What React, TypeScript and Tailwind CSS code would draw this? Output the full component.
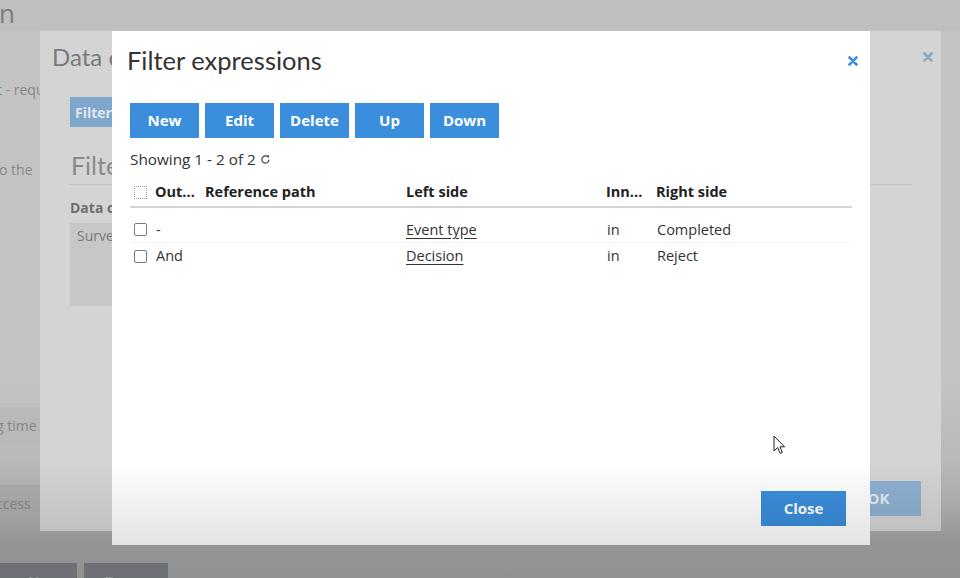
import React from "react";

const btn =
  "h-[35px] w-[69px] bg-[#3b8edc] text-white font-bold text-[15px] flex items-center justify-center";

function XIcon({ className }: { className?: string }) {
  return (
    <svg viewBox="0 0 10 10" className={className} fill="none">
      <path d="M1.5 1.5 L8.5 8.5 M8.5 1.5 L1.5 8.5" stroke="currentColor" strokeWidth="2.6" strokeLinecap="round" />
    </svg>
  );
}

function Refresh() {
  return (
    <svg viewBox="0 0 12 12" className="w-[11px] h-[11px] ml-[4px] mt-[1px]" fill="none">
      <path d="M9.8 6.3 A3.9 3.9 0 1 1 8.4 3" stroke="#555" strokeWidth="1.5" />
      <path d="M7 1.2 L10.2 1.6 L9.4 4.6 Z" fill="#555" />
    </svg>
  );
}

function Cursor() {
  return (
    <svg viewBox="0 0 13 20" className="absolute left-[773px] top-[435px] w-[13px] h-[20px]">
      <path d="M1 1 L1 16 L4.6 12.6 L7.2 18.4 L9.4 17.4 L6.9 11.8 L11.6 11.8 Z" fill="white" stroke="#222" strokeWidth="1" strokeLinejoin="round" />
    </svg>
  );
}

const rows = [
  { op: "-", left: "Event type", inn: "in", right: "Completed" },
  { op: "And", left: "Decision", inn: "in", right: "Reject" },
];

const grid = "grid grid-cols-[25px_50px_201px_200px_50px_1fr] items-center";

export default function App() {
  return (
    <div
      className="relative w-[960px] h-[578px] overflow-hidden bg-[linear-gradient(to_bottom,#c3c3c3_0px,#c3c3c3_380px,#b4b4b4_500px,#a7a7a7_540px,#a5a5a5_100%)] text-[#878787]"
      style={{ fontFamily: '"Open Sans", "Liberation Sans", sans-serif' }}
    >
      {/* underlying page */}
      <div className="flex flex-col">
        <div className="shrink-0 h-[31px] bg-[#bfbfbf] flex items-center">
          <span className="text-[26px] leading-none -mt-[6px] ml-[-1px] text-[#7d7d7d]">n</span>
        </div>
        <div className="shrink-0 mt-[49px] text-[14px] leading-[20px] ml-[-3px]">t - required</div>
        <div className="shrink-0 mt-[60px] text-[14px] leading-[20px] ml-[-1px]">o the</div>
        <div className="shrink-0 mt-[227px] w-[120px] h-[36px] bg-[#b9b9b9] flex items-center text-[14px] ml-[-4px]">g time</div>
        <div className="shrink-0 mt-[42px] w-[120px] h-[36px] bg-[#adadad] flex items-center text-[14px] ml-[-4px]">ccess</div>
        <div className="shrink-0 mt-[42px] flex gap-[7px]">
          <div className="w-[77px] h-[30px] bg-[#7c8086] text-[#a9adb3] text-[15px] font-bold flex justify-center pt-[7px]">Up</div>
          <div className="w-[84px] h-[30px] bg-[#7c8086] text-[#a9adb3] text-[15px] font-bold flex justify-center pt-[7px]">Down</div>
        </div>
      </div>

      {/* back dialog */}
      <div className="absolute left-[40px] top-[31px] w-[901px] h-[500px] bg-[#d4d4d4] flex flex-col">
        <div className="flex items-start justify-between">
          <div
            className="pl-[12px] pt-[10px] text-[24px] leading-[32px] text-[#7a7a7a]"
            style={{ fontFamily: 'Lato, "Open Sans", sans-serif' }}
          >
            Data configuration
          </div>
          <XIcon className="w-[10px] h-[10px] mt-[21px] mr-[8px] text-[#8aa6c2]" />
        </div>
        <div className="ml-[30px] mt-[24px] w-[80px] h-[30px] bg-[#7fa7cc] text-[#dfe8f1] font-bold text-[14px] flex items-center pl-[5px]">
          Filter
        </div>
        <div
          className="ml-[31px] mt-[22px] text-[25px] leading-[32px] text-[#8a8a8a]"
          style={{ fontFamily: 'Lato, "Open Sans", sans-serif' }}
        >
          Filters
        </div>
        <div className="ml-[30px] mr-[29px] mt-[3px] h-px bg-[#c2c2c2]" />
        <div className="ml-[30px] mt-[14px] text-[14px] font-bold text-[#6e6e6e] leading-[18px]">Data collection</div>
        <div className="ml-[30px] mt-[6px] w-[120px] h-[83px] bg-[#c7c7c7] text-[14px] text-[#7a7a7a] pl-[7px] pt-[2px]">
          Survey
        </div>
        <div className="flex-1" />
        <div className="self-end mr-[20px] mb-[15px] w-[85px] h-[35px] bg-[#8eb0d1] text-[#e4ecf4] font-bold text-[15px] flex items-center justify-center">
          OK
        </div>
      </div>

      {/* front dialog */}
      <div className="absolute left-[112px] top-[31px] w-[758px] h-[514px] bg-white flex flex-col text-[#333]">
        <div className="flex items-start justify-between">
          <div
            className="pl-[15px] pt-[13px] text-[25.5px] leading-[32px] text-[#333]"
            style={{ fontFamily: 'Lato, "Open Sans", sans-serif' }}
          >
            Filter expressions
          </div>
          <XIcon className="w-[10px] h-[10px] mt-[25px] mr-[12px] text-[#3b8edc]" />
        </div>
        <div className="pl-[18px] pr-[18px] flex flex-col">
          <div className="mt-[27px] flex gap-[6px]">
            <div className={btn}>New</div>
            <div className={btn}>Edit</div>
            <div className={btn}>Delete</div>
            <div className={btn}>Up</div>
            <div className={btn}>Down</div>
          </div>
          <div className="mt-[11px] flex items-center text-[15.3px] leading-[20px]">
            Showing 1 - 2 of 2
            <Refresh />
          </div>
          <div className={`${grid} mt-[9px] h-[30px] border-b-2 border-[#d4d4d4] font-bold text-[14.5px] text-[#222]`}>
            <div className="pl-[4px]">
              <div className="w-[13px] h-[13px] border border-dotted border-[#9a9a9a] mt-[1px]" />
            </div>
            <div>Out...</div>
            <div>Reference path</div>
            <div>Left side</div>
            <div>Inn...</div>
            <div>Right side</div>
          </div>
          <div className="pt-[9px] flex flex-col">
            {rows.map((r, i) => (
              <div
                key={i}
                className={`${grid} h-[26px] text-[14.5px] ${i === 0 ? "border-b border-[#f4f4f4]" : ""}`}
              >
                <div className="pl-[4px]">
                  <div className="w-[13px] h-[13px] border border-[#7a7a7a] rounded-[2px]" />
                </div>
                <div className="pl-[1px]">{r.op}</div>
                <div />
                <div className="underline underline-offset-[3px]">{r.left}</div>
                <div className="pl-[1px]">{r.inn}</div>
                <div className="pl-[1px]">{r.right}</div>
              </div>
            ))}
          </div>
        </div>
        <div className="flex-1" />
        <div className="self-end mr-[24px] mb-[19px] w-[85px] h-[35px] bg-[#3b8edc] text-white font-bold text-[15px] flex items-center justify-center">
          Close
        </div>
      </div>

      <Cursor />

      {/* video vignette */}
      <div className="absolute inset-0 pointer-events-none bg-[linear-gradient(to_bottom,transparent_0px,transparent_460px,rgba(0,0,0,0.11)_545px,rgba(0,0,0,0.12)_100%)]" />
    </div>
  );
}
